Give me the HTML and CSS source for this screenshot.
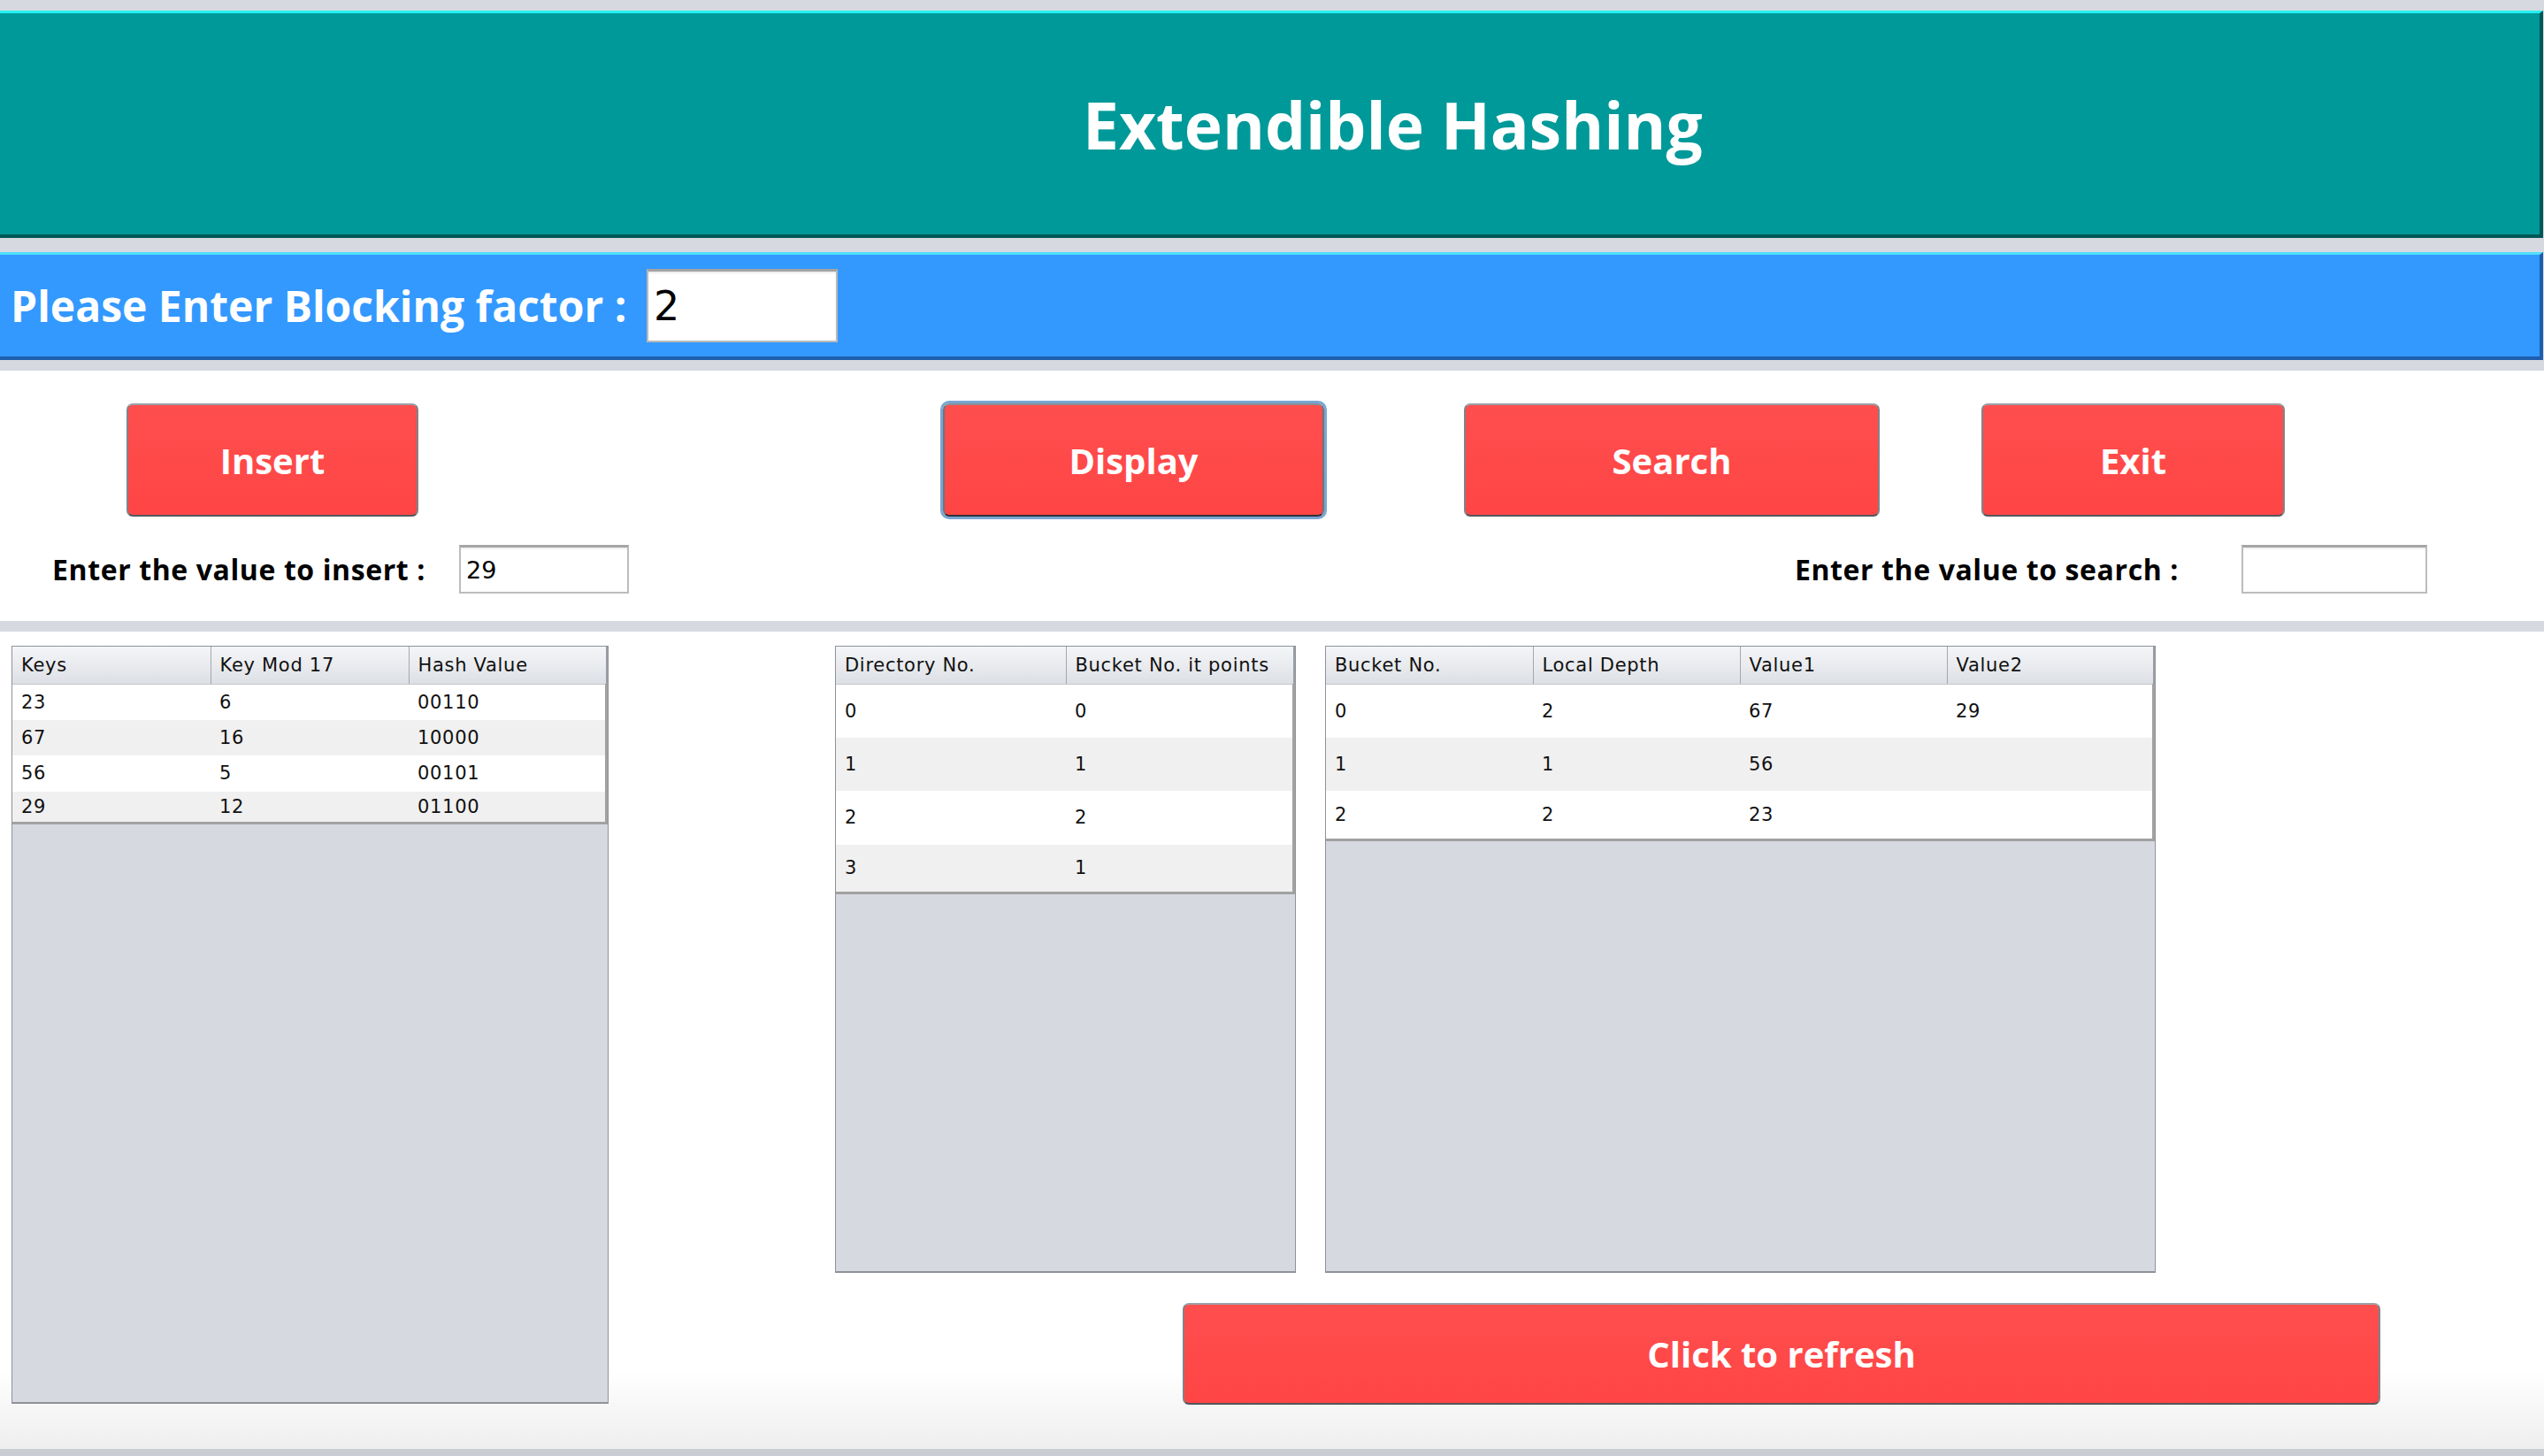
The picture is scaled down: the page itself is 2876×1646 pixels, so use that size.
FILE: index.html
```html
<!DOCTYPE html>
<html>
<head>
<meta charset="utf-8">
<title>Extendible Hashing</title>
<link rel="stylesheet" href="styles.css">
</head>
<body>
<div class="app">
  <header class="title-bar">
    <h1 class="title">Extendible Hashing</h1>
  </header>

  <section class="factor-bar">
    <label class="factor-label" for="factor">Please Enter Blocking factor :</label>
    <input id="factor" class="factor-input" type="text" value="2">
  </section>

  <section class="controls">
    <div class="button-row">
      <button class="btn btn-insert">Insert</button>
      <button class="btn btn-display">Display</button>
      <button class="btn btn-search">Search</button>
      <button class="btn btn-exit">Exit</button>
    </div>
    <div class="input-row">
      <label class="field-label insert-label" for="ins">Enter the value to insert :</label>
      <input id="ins" class="text-input insert-input" type="text" value="29">
      <label class="field-label search-label" for="srch">Enter the value to search :</label>
      <input id="srch" class="text-input search-input" type="text" value="">
    </div>
  </section>

  <section class="tables">
    <div class="pane pane-keys">
      <table class="grid grid-keys">
        <colgroup><col class="c224"><col class="c224"><col></colgroup>
        <thead><tr><th>Keys</th><th>Key Mod 17</th><th>Hash Value</th></tr></thead>
        <tbody>
          <tr><td>23</td><td>6</td><td>00110</td></tr>
          <tr><td>67</td><td>16</td><td>10000</td></tr>
          <tr><td>56</td><td>5</td><td>00101</td></tr>
          <tr><td>29</td><td>12</td><td>01100</td></tr>
        </tbody>
      </table>
    </div>

    <div class="right-col">
      <div class="right-tables">
        <div class="pane pane-dir">
          <table class="grid grid-tall">
            <colgroup><col class="c260"><col></colgroup>
            <thead><tr><th>Directory No.</th><th>Bucket No. it points</th></tr></thead>
            <tbody>
              <tr><td>0</td><td>0</td></tr>
              <tr><td>1</td><td>1</td></tr>
              <tr><td>2</td><td>2</td></tr>
              <tr><td>3</td><td>1</td></tr>
            </tbody>
          </table>
        </div>
        <div class="pane pane-bucket">
          <table class="grid grid-tall">
            <colgroup><col class="c234"><col class="c234"><col class="c234"><col></colgroup>
            <thead><tr><th>Bucket No.</th><th>Local Depth</th><th>Value1</th><th>Value2</th></tr></thead>
            <tbody>
              <tr><td>0</td><td>2</td><td>67</td><td>29</td></tr>
              <tr><td>1</td><td>1</td><td>56</td><td></td></tr>
              <tr><td>2</td><td>2</td><td>23</td><td></td></tr>
            </tbody>
          </table>
        </div>
      </div>
      <button class="btn btn-refresh">Click to refresh</button>
    </div>
  </section>

  <div class="bottom-bar"></div>
</div>
</body>
</html>
```

FILE: styles.css
```css
* { box-sizing: border-box; }

html, body {
  margin: 0;
  padding: 0;
}

body {
  width: 2876px;
  height: 1646px;
  overflow: hidden;
  background: #d6d9e0;
  font-family: "Open Sans", "DejaVu Sans", sans-serif;
}

.app {
  display: flex;
  flex-direction: column;
  height: 1646px;
}

/* ---------- title ---------- */
.title-bar {
  margin-top: 12px;
  height: 257px;
  width: 2875px;
  background: #009999;
  border-top: 3px solid #22f0f0;
  border-bottom: 4px solid #005757;
  border-right: 4px solid #005757;
  display: flex;
  align-items: center;
  padding-left: 1224px;
}

.title {
  margin: 0;
  font-size: 73px;
  font-weight: 700;
  line-height: 1;
  letter-spacing: 0;
  color: #ffffff;
}

/* ---------- blocking factor ---------- */
.factor-bar {
  margin-top: 16px;
  height: 122px;
  width: 2875px;
  background: #3399ff;
  border-top: 3px solid #4fe0ff;
  border-bottom: 4px solid #1d5ead;
  border-right: 4px solid #1d5ead;
  display: flex;
  align-items: center;
  padding-left: 12px;
}

.factor-label {
  width: 719px;
  white-space: nowrap;
  font-size: 48px;
  font-weight: 700;
  color: #ffffff;
}

.factor-input {
  width: 216px;
  height: 83px;
  margin: 0;
  padding: 0 0 0 6px;
  background: #ffffff;
  border: 2px solid #b9b9b9;
  border-top: 3px solid #a3a3a3;
  box-shadow: inset 0 2px 2px rgba(0, 0, 0, 0.08);
  font-family: "DejaVu Sans", sans-serif;
  font-size: 46px;
  color: #000000;
  outline: none;
}

/* ---------- controls ---------- */
.controls {
  margin-top: 12px;
  height: 283px;
  background: #ffffff;
  padding-top: 37px;
}

.button-row {
  display: flex;
  height: 128px;
}

.btn {
  margin: 0;
  padding: 0;
  background: linear-gradient(to bottom, #ff4e4e, #ff4545);
  border: 2px solid;
  border-color: #9ba0a6 #7f848a #53575d #7f848a;
  border-radius: 7px;
  color: #ffffff;
  font-family: "Open Sans", "DejaVu Sans", sans-serif;
  font-size: 40px;
  font-weight: 700;
  cursor: pointer;
}

.btn-insert  { margin-left: 143px; width: 330px; height: 128px; }
.btn-display {
  margin-left: 593px;
  width: 431px;
  height: 128px;
  box-shadow: 0 0 0 3px #79a6d3;
  border-color: #8a8f95 #6f747a #2f3237 #6f747a;
}
.btn-search  { margin-left: 158px; width: 470px; height: 128px; }
.btn-exit    { margin-left: 115px; width: 343px; height: 128px; }

.input-row {
  margin-top: 32px;
  height: 55px;
  display: flex;
  align-items: center;
}

.field-label {
  white-space: nowrap;
  font-size: 32px;
  font-weight: 700;
  letter-spacing: 0.6px;
  color: #000000;
}

.insert-label {
  margin-left: 59px;
  width: 460px;
}

.search-label {
  margin-left: auto;
}

.text-input {
  height: 55px;
  margin: 0;
  padding: 0 0 0 6px;
  background: #ffffff;
  border: 2px solid #bdbdbd;
  border-top: 3px solid #a6a6a6;
  box-shadow: inset 0 2px 2px rgba(0, 0, 0, 0.06);
  font-family: "DejaVu Sans", sans-serif;
  font-size: 27px;
  color: #000000;
  outline: none;
}

.insert-input { width: 192px; }
.search-input { width: 210px; margin-left: 71px; margin-right: 132px; }

/* ---------- tables ---------- */
.tables {
  margin-top: 12px;
  height: 924px;
  background: linear-gradient(to bottom, #ffffff 0, #ffffff 835px, #eeeeef 924px);
  display: flex;
  align-items: flex-start;
  padding-top: 16px;
  padding-left: 13px;
}

.pane {
  background: #d6d9e0;
  border: 1px solid #8e929a;
  border-bottom: 2px solid #8e929a;
  overflow: hidden;
}

.pane-keys   { width: 675px; height: 857px; }

.right-col {
  margin-left: 256px;
  display: flex;
  flex-direction: column;
  align-items: flex-start;
}

.right-tables {
  display: flex;
}

.pane-dir    { width: 521px; height: 709px; }
.pane-bucket { width: 939px; height: 709px; margin-left: 33px; }

.btn-refresh {
  margin-left: 393px;
  margin-top: 34px;
  width: 1354px;
  height: 115px;
}

.grid {
  width: 100%;
  border-collapse: collapse;
  table-layout: fixed;
  font-family: "DejaVu Sans", sans-serif;
  font-size: 21px;
  letter-spacing: 0.7px;
  color: #111111;
}

.c224 { width: 224px; }
.c260 { width: 260px; }
.c234 { width: 234px; }

.grid th {
  height: 42px;
  padding: 0 0 0 10px;
  text-align: left;
  font-weight: 400;
  background: linear-gradient(to bottom, #f4f5f7 0%, #e8eaee 55%, #dcdfe4 100%);
  border-right: 1px solid #a4a8af;
  border-bottom: 1px solid #c3c6cc;
  white-space: nowrap;
  overflow: hidden;
}

.grid th:last-child { border-right: 2px solid #9a9ea5; }

.grid td {
  padding: 0 0 0 10px;
  white-space: nowrap;
}

.grid tbody tr:nth-child(odd)  { background: #ffffff; }
.grid tbody tr:nth-child(even) { background: #f0f0f0; }

.grid tbody td:last-child { border-right: 3px solid #a2a2a2; }
.grid tbody tr:last-child td { border-bottom: 3px solid #a2a2a2; }

.grid-keys tbody tr { height: 40.5px; }
.grid-keys tbody tr:last-child { height: 36px; }

.grid-tall tbody tr { height: 60.5px; }
.grid-tall tbody tr:last-child { height: 55px; }

/* ---------- bottom ---------- */
.bottom-bar {
  height: 8px;
  background: #c9ccd3;
}
```
